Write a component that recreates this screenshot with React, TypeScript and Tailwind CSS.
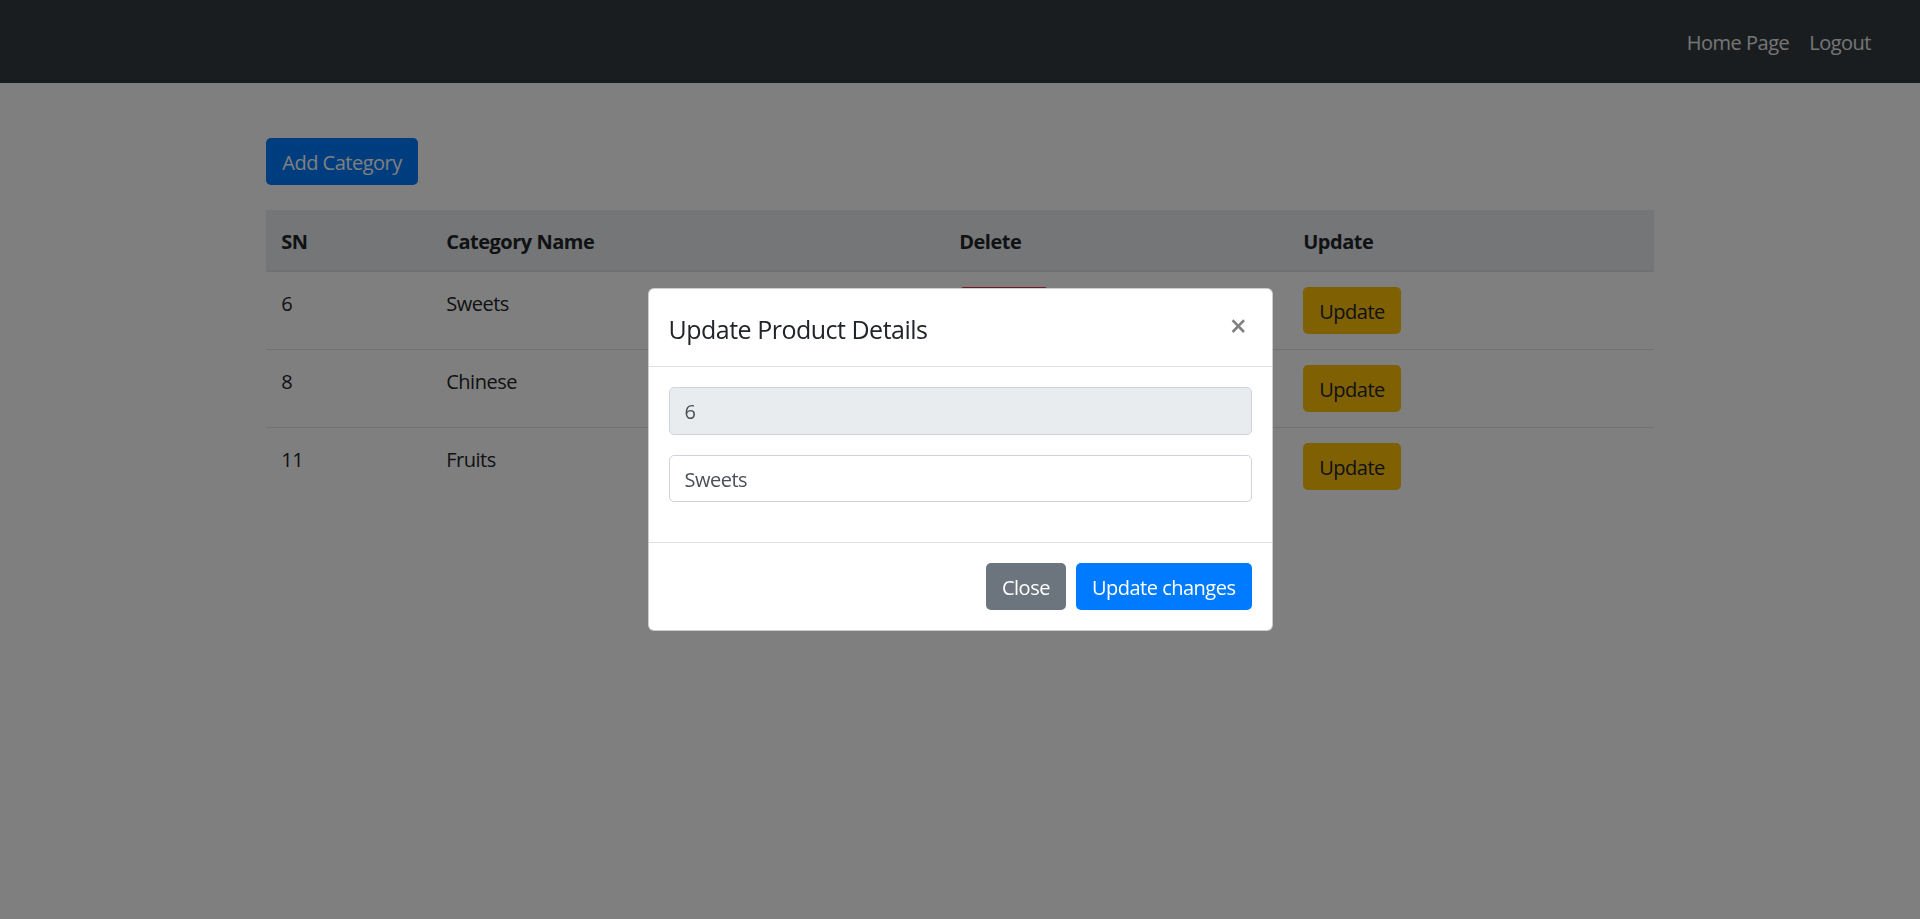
import React from "react";

// ── Data ──────────────────────────────────────────────────────────────────────

const categories = [
  { id: 6, name: "Sweets" },
  { id: 8, name: "Chinese" },
  { id: 11, name: "Fruits" },
];

// ── Page ──────────────────────────────────────────────────────────────────────

function App(): React.ReactElement {
  return (
    <div className="relative min-h-[919px] bg-white font-['Open_Sans',sans-serif] text-[20px] leading-[1.5] tracking-[-0.5px] text-[#212529]">
      <nav className="h-[83px] bg-[#343a40] flex items-center justify-end pr-[39px]">
        <a className="px-[10px] pt-[2px] text-white/90">Home Page</a>
        <a className="px-[10px] pt-[2px] text-white/90">Logout</a>
      </nav>

      <div className="w-[1425px] mx-auto px-[18.75px] pt-[55px]">
        <button className="px-[15px] pt-[8.5px] pb-[6.5px] rounded-[5px] border border-transparent bg-[#007bff] text-white">
          Add Category
        </button>

        <table className="w-full mt-[25px] border-collapse">
          <thead>
            <tr className="bg-[#e9ecef]">
              <th className="w-[165px] px-[15px] pt-[17px] pb-[13px] text-left font-bold border-b-2 border-[#dee2e6]">
                SN
              </th>
              <th className="w-[513px] px-[15px] pt-[17px] pb-[13px] text-left font-bold border-b-2 border-[#dee2e6]">
                Category Name
              </th>
              <th className="w-[344px] px-[15px] pt-[17px] pb-[13px] text-left font-bold border-b-2 border-[#dee2e6]">
                Delete
              </th>
              <th className="px-[15px] pt-[17px] pb-[13px] text-left font-bold border-b-2 border-[#dee2e6]">
                Update
              </th>
            </tr>
          </thead>
          <tbody>
            {categories.map((c) => (
              <tr key={c.id}>
                <td className="px-[15px] pt-[17px] pb-[13px] align-top border-t border-[#dee2e6]">{c.id}</td>
                <td className="px-[15px] pt-[17px] pb-[13px] align-top border-t border-[#dee2e6]">{c.name}</td>
                <td className="p-[15px] align-top border-t border-[#dee2e6]">
                  <button className="px-[15px] py-[7.5px] rounded-[5px] border border-transparent bg-[#dc3545] text-white">
                    Delete
                  </button>
                </td>
                <td className="p-[15px] align-top border-t border-[#dee2e6]">
                  <button className="px-[15px] pt-[8.5px] pb-[6.5px] rounded-[5px] border border-transparent bg-[#ffc107] text-[#212529]">
                    Update
                  </button>
                </td>
              </tr>
            ))}
          </tbody>
        </table>
      </div>

      {/* Backdrop + modal */}
      <div className="fixed inset-0 bg-black/50" />
      <div className="fixed inset-0 flex items-center justify-center">
        <div className="w-[625px] bg-white border border-black/20 rounded-[6px]">
          <div className="flex items-start justify-between p-[20px] border-b border-[#dee2e6]">
            <h5 className="pt-[2px] -mb-[2px] text-[25px] leading-[1.5] font-medium">Update Product Details</h5>
            <span className="mt-[2px] mr-[5px] text-[30px] leading-none font-semibold text-black/50">
              ×
            </span>
          </div>
          <div className="p-[20px]">
            <div className="mb-[20px] h-[47.5px] px-[15px] pt-[2px] flex items-center bg-[#e9ecef] border border-[#ced4da] rounded-[5px] text-[#495057]">
              6
            </div>
            <div className="mb-[20px] h-[47.5px] px-[15px] pt-[2px] flex items-center bg-white border border-[#ced4da] rounded-[5px] text-[#495057]">
              Sweets
            </div>
          </div>
          <div className="flex justify-end items-center p-[15px] border-t border-[#dee2e6]">
            <button className="m-[5px] px-[15px] pt-[8.5px] pb-[6.5px] rounded-[5px] border border-transparent bg-[#6c757d] text-white">
              Close
            </button>
            <button className="m-[5px] px-[15px] pt-[8.5px] pb-[6.5px] rounded-[5px] border border-transparent bg-[#007bff] text-white">
              Update changes
            </button>
          </div>
        </div>
      </div>
    </div>
  );
}

export default App;
